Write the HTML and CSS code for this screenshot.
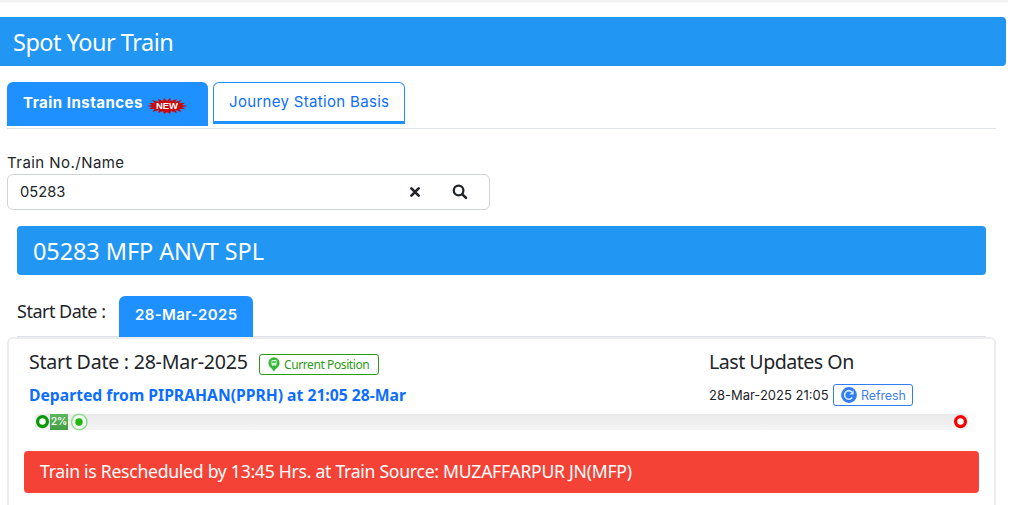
FILE: index.html
```html
<!DOCTYPE html>
<html lang="en">
<head>
<meta charset="utf-8">
<title>Spot Your Train</title>
<link rel="stylesheet" href="styles.css">
</head>
<body>
<div class="topline"></div>
<header class="title"><span class="title-text">Spot Your Train</span></header>
<main class="content">
  <nav class="tabs">
    <a class="tab active"><span class="instances">Train Instances</span>
      <svg class="new" width="42" height="18" viewBox="0 0 42 18"><path d="M1 9l5-1-3-2 6 0-3-3 7 2-1-3 5 2 1-3 3 3 3-3 1 3 6-2-2 3 7-2-3 3 6 0-3 2 6 1-6 1 3 2-6 0 3 3-7-2 2 3-6-2-1 3-3-2-3 2-1-3-5 2 1-3-7 2 3-3-6 0 3-2z" fill="#c90808"/><text class="new-text" x="21" y="11.8" text-anchor="middle" textLength="22" lengthAdjust="spacingAndGlyphs">NEW</text></svg>
    </a>
    <a class="tab outline"><span class="journey">Journey Station Basis</span></a>
  </nav>
  <label class="label"><span class="label-text">Train No./Name</span></label>
  <div class="search">
    <span class="search-value">05283</span>
    <svg class="clear" width="12" height="12" viewBox="0 0 12 12"><path d="M2.4 2.4l7.2 7.2M9.6 2.4L2.4 9.6" stroke="#212529" stroke-width="2.7" stroke-linecap="round"/></svg>
    <svg class="find" width="16" height="16" viewBox="0 0 16 16"><circle cx="6.6" cy="6.5" r="4.8" fill="none" stroke="#212529" stroke-width="2.3"/><path d="M10.4 10.4l3.6 3.5" stroke="#212529" stroke-width="2.7" stroke-linecap="round"/></svg>
  </div>
  <section class="train"><span class="train-text">05283 MFP ANVT SPL</span></section>
  <div class="dates">
    <span class="date-label">Start Date :</span>
    <a class="date-tab"><span class="date-text">28-Mar-2025</span></a>
  </div>
  <section class="panel">
    <div class="info">
      <div class="left">
        <div class="heading"><span class="start">Start Date : 28-Mar-2025</span>
          <a class="button position"><svg width="12" height="15" viewBox="0 0 12 15"><path d="M6 .3a5.6 5.6 0 0 0-5.6 5.6C.4 9.700 4 11 6 14.500 8 11 11.600 9.700 11.600 5.900A5.600 5.600 0 0 0 6 .3z" fill="#36b83b"/><rect x="3.400" y="2.900" width="5.200" height="5.200" rx="1" fill="#d9f5da"/><path d="M4.200 4h3.600v2H4.200z" fill="#55c459"/><path d="M4 9l1-1h2l1 1" fill="none" stroke="#d9f5da" stroke-width=".8"/></svg><span class="position-text">Current Position</span></a>
        </div>
        <div class="status"><span class="status-text">Departed from PIPRAHAN(PPRH) at 21:05 28-Mar</span></div>
      </div>
      <div class="right">
        <div class="heading"><span class="updates">Last Updates On</span></div>
        <div class="status"><span class="time">28-Mar-2025 21:05</span>
          <a class="button refresh"><svg width="16" height="16" viewBox="0 0 16 16"><circle cx="8" cy="8" r="7.900" fill="#2f7df0"/><path d="M11.300 10.600a4.300 4.300 0 1 1-.3-5.600" fill="none" stroke="#dceaff" stroke-width="1.600"/><path d="M12.600 3.400v4.200H8.400z" fill="#dceaff"/></svg><span class="refresh-text">Refresh</span></a>
        </div>
      </div>
    </div>
    <div class="progress">
      <svg class="source" width="14" height="16" viewBox="0 0 14 16"><circle cx="6.500" cy="7.600" r="4.900" fill="#fff" stroke="#089b08" stroke-width="3.300"/></svg>
      <div class="done"><span class="percent">2%</span></div>
      <svg class="current" width="18" height="16" viewBox="0 0 18 16"><circle cx="9.300" cy="8" r="7.700" fill="#f4fbf4" stroke="#8fda90" stroke-width="1.500"/><circle cx="9" cy="8" r="3.700" fill="#22b50c"/></svg>
      <svg class="destination" width="14" height="16" viewBox="0 0 14 16"><circle cx="6.500" cy="7.600" r="4.900" fill="#fff" stroke="#f80000" stroke-width="3.300"/></svg>
    </div>
    <div class="alert"><span class="alert-text">Train is Rescheduled by 13:45 Hrs. at Train Source: MUZAFFARPUR JN(MFP)</span></div>
  </section>
</main>
</body>
</html>
```
FILE: styles.css
```css
* { box-sizing: border-box; }
body { margin: 0; height: 505px; overflow: hidden; background: #fff; color: #212529; font-family: "Noto Sans", "Open Sans", sans-serif; }
span { white-space: nowrap; }
svg { display: block; flex: none; overflow: visible; }
.topline { width: 1008px; height: 2px; margin-bottom: 15px; background: #f1f1f1; box-shadow: 0 1px 1px #fafafa; }
.title { display: flex; align-items: center; width: 1006px; height: 49px; padding: 0 13px; background: #2196f3; color: #fff; border-radius: 0 4px 4px 0; }
.title-text { font-size: 23.5px; letter-spacing: -.5px; }
.content { width: 996px; padding: 16px 0 0 7px; }
.tabs { display: flex; gap: 5px; height: 47px; border-bottom: 1px solid #dee2e6; font-family: Inter, sans-serif; }
.tab { display: flex; align-items: center; border-radius: 6px 6px 0 0; }
.active { width: 201px; height: 44px; padding: 0 0 3px 16px; background: #1e90ff; color: #fff; font-weight: 700; }
.instances { font-size: 15px; width: 123px; letter-spacing: .5px; }
.new { margin-top: 6px; }
.new-text { fill: #fff; font: bold 8.5px "Liberation Sans", sans-serif; }
.outline { width: 192px; height: 42px; padding: 0 0 2px 15px; border: 1px solid #1e90ff; border-bottom-width: 3px; color: #0d6efd; }
.journey { font-size: 15px; letter-spacing: .32px; }
.label { display: flex; align-items: center; height: 24px; margin-top: 21px; font-family: Inter, sans-serif; }
.label-text { font-size: 15px; letter-spacing: .45px; }
.search { display: flex; align-items: center; width: 483px; height: 36px; padding: 0 0 1px 12px; border: 1px solid #ced4da; border-radius: 6px; font-family: Inter, sans-serif; }
.search-value { width: 389px; font-size: 14.700px; }
.find { margin-left: 31px; }
.train { display: flex; align-items: center; width: 969px; height: 49px; margin: 16px 0 0 10px; padding: 0 16px; background: #2196f3; color: #fff; border-radius: 4px; }
.train-text { font-size: 23.500px; letter-spacing: -.1px; }
.dates { display: flex; width: 969px; height: 41px; margin: 21px 0 0 10px; border-bottom: 1px solid #dee2e6; }
.date-label { width: 102px; padding-top: 3px; font-size: 18px; letter-spacing: -.5px; }
.date-tab { display: flex; align-items: center; width: 134px; height: 41px; padding: 0 0 4px 16px; background: #1e90ff; color: #fff; border-radius: 6px 6px 0 0; font-family: Inter, sans-serif; font-weight: 600; }
.date-text { font-size: 15px; letter-spacing: .38px; }
.panel { height: 190px; padding: 9px 15px 0; border: 2px solid #ededed; border-radius: 6px; }
.info { display: flex; padding-left: 5px; }
.left { width: 680px; }
.heading { display: flex; align-items: center; height: 32px; }
.start, .updates { margin-top: -5px; font-size: 19.600px; }
.start { width: 230px; letter-spacing: -.25px; }
.updates { letter-spacing: -.5px; }
.button { display: flex; align-items: center; border: 1px solid; border-radius: 3px; }
.position { width: 120px; height: 21px; margin-top: 1px; padding-left: 8px; gap: 4px; color: #2b9b14; }
.position-text { font-size: 12px; letter-spacing: -.4px; }
.status { display: flex; align-items: center; height: 32px; padding-bottom: 2px; }
.status-text { color: #0d6efd; font-size: 15.700px; font-weight: 700; }
.time { width: 124px; font: 13px Inter, sans-serif; }
.refresh { width: 80px; height: 22px; padding-left: 7px; gap: 4px; border-color: #2f7df0; color: #3f7ff0; }
.refresh-text { font: 12.500px Inter, sans-serif; letter-spacing: -.1px; }
.progress { display: flex; align-items: center; width: 933px; height: 16px; margin: 2px 0 0 11px; padding-left: 1px; background: linear-gradient(#e9e9e9, #f5f5f5); border-radius: 4px; }
.done { display: flex; align-items: center; justify-content: center; width: 18px; height: 16px; margin-right: 2px; background: linear-gradient(#5cb85c, #449d44); color: #fff; }
.percent { padding-bottom: 2px; font: 500 10.500px Inter, sans-serif; letter-spacing: -.2px; }
.destination { margin-left: auto; }
.alert { display: flex; align-items: center; width: 955px; height: 42px; margin-top: 21px; padding: 0 0 2px 16px; background: #f44336; color: #fff; border-radius: 4px; }
.alert-text { font-size: 17.600px; letter-spacing: -.27px; }
```
